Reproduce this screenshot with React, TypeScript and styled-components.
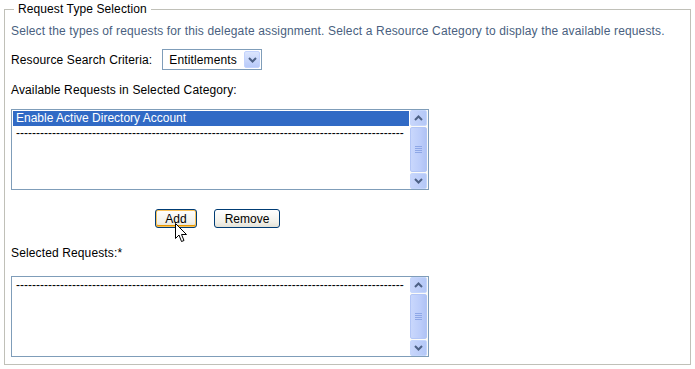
import React from "react";
import styled, { createGlobalStyle } from "styled-components";

const Global = createGlobalStyle`
  html, body { margin: 0; padding: 0; background: #ffffff; }
  body { font-family: "Liberation Sans", Arial, sans-serif; font-size: 12px; color: #000; }
`;

const Fieldset = styled.fieldset`
  margin: 2px 4px 0 4px;
  padding: 0 6px 5px 6px;
  border: 1px solid #c0c0b8;
  height: 363px;
  box-sizing: border-box;
  position: relative;

  legend {
    padding: 0 4px;
    margin-left: 3px;
    font-size: 12px;
    letter-spacing: 0.1px;
    color: #000;
  }
`;

const Intro = styled.div`
  color: #4a5f80;
  margin-top: 8px;
  line-height: 14px;
  letter-spacing: 0.15px;
`;

const Label = styled.div<{ $top: number }>`
  margin-top: ${(p) => p.$top}px;
  line-height: 14px;
  letter-spacing: 0.13px;
`;

const Row = styled.div`
  display: flex;
  align-items: center;
  gap: 10px;
  margin-top: 11px;
  letter-spacing: 0.13px;
`;

const Select = styled.div`
  display: flex;
  align-items: center;
  justify-content: space-between;
  width: 100px;
  height: 21px;
  box-sizing: border-box;
  border: 1px solid #7f9db9;
  padding: 0 1px 0 6px;
  background: #fff;
`;

const DropBtn = styled.div`
  width: 16px;
  height: 17px;
  box-sizing: border-box;
  border: 1px solid #c3d3fd;
  border-radius: 2px;
  background: linear-gradient(#dbe5fd, #b8caf9);
  display: flex;
  align-items: center;
  justify-content: center;
`;

const ListBox = styled.div<{ $top: number }>`
  margin-top: ${(p) => p.$top}px;
  width: 418px;
  height: 81px;
  box-sizing: border-box;
  border: 1px solid #7f9db9;
  display: flex;
  background: #fff;
`;

const Items = styled.div`
  flex: 1;
  padding: 1px 1px 0 1px;
  overflow: hidden;
`;

const Item = styled.div<{ $selected?: boolean }>`
  height: 15px;
  line-height: 15px;
  padding-left: 3px;
  white-space: nowrap;
  overflow: hidden;
  background: ${(p) => (p.$selected ? "#316ac5" : "transparent")};
  color: ${(p) => (p.$selected ? "#fff" : "#000")};
`;

const Scrollbar = styled.div`
  width: 17px;
  display: flex;
  flex-direction: column;
  background: #fbfbf8;
  padding: 0 1px 0 0;
  gap: 1px;
`;

const ScrollBtn = styled.div`
  height: 16px;
  box-sizing: border-box;
  border: 1px solid #c5d6fc;
  border-radius: 2px;
  background: linear-gradient(90deg, #c8d6fb, #b4c8f7);
  display: flex;
  align-items: center;
  justify-content: center;
`;

const Thumb = styled.div`
  flex: 1;
  box-sizing: border-box;
  border: 1px solid #b3c6f6;
  border-radius: 2px;
  background: linear-gradient(90deg, #c9d7fc, #bccdfa 60%, #b0c3f5);
  display: flex;
  align-items: center;
  justify-content: center;
`;

const Buttons = styled.div`
  display: flex;
  gap: 17px;
  margin-top: 19px;
  margin-left: 144px;
  position: relative;
`;

const Button = styled.div<{ $focus?: boolean; $w: number }>`
  width: ${(p) => p.$w}px;
  height: 19px;
  box-sizing: border-box;
  border: 1px solid #003c74;
  border-radius: 3px;
  background: linear-gradient(#ffffff, #f2f1ea 70%, #e3e1d6);
  box-shadow: ${(p) => (p.$focus ? "inset 0 0 0 1px #f9c25a, inset 0 -1px 0 1px #e59700" : "none")};
  display: flex;
  align-items: center;
  justify-content: center;
  font-size: 12px;
`;

const Cursor = styled.svg`
  position: absolute;
  left: 20px;
  top: 14px;
`;

const Chevron = ({ up }: { up?: boolean }) => (
  <svg width="9" height="6" viewBox="0 0 9 6">
    <path
      d={up ? "M1 5 L4.5 1.5 L8 5" : "M1 1 L4.5 4.5 L8 1"}
      stroke="#4d6185"
      strokeWidth="2"
      fill="none"
    />
  </svg>
);

const Grip = () => (
  <svg width="7" height="8" viewBox="0 0 7 8">
    {[0, 2, 4, 6].map((y) => (
      <rect key={y} x="0" y={y} width="7" height="1" fill="#8ea7e6" />
    ))}
  </svg>
);

const Bar = () => (
  <Scrollbar>
    <ScrollBtn>
      <Chevron up />
    </ScrollBtn>
    <Thumb>
      <Grip />
    </Thumb>
    <ScrollBtn>
      <Chevron />
    </ScrollBtn>
  </Scrollbar>
);

const dashes = "-".repeat(97);

export default function App() {
  return (
    <>
      <Global />
      <Fieldset>
        <legend>Request Type Selection</legend>
        <Intro>
          Select the types of requests for this delegate assignment. Select a Resource Category to display the
          available requests.
        </Intro>
        <Row>
          <span>Resource Search Criteria:</span>
          <Select>
            <span>Entitlements</span>
            <DropBtn>
              <Chevron />
            </DropBtn>
          </Select>
        </Row>
        <Label $top={13}>Available Requests in Selected Category:</Label>
        <ListBox $top={12}>
          <Items>
            <Item $selected>Enable Active Directory Account</Item>
            <Item>{dashes}</Item>
          </Items>
          <Bar />
        </ListBox>
        <Buttons>
          <Button $w={42} $focus>
            Add
          </Button>
          <Button $w={66}>Remove</Button>
          <Cursor width="13" height="20" viewBox="0 0 13 20">
            <path
              d="M0.5 0.5 L0.5 15.5 L4 12 L6.5 18.5 L9 17.5 L6.5 11.5 L11.5 11.5 Z"
              fill="#fff"
              stroke="#000"
              strokeWidth="1"
            />
          </Cursor>
        </Buttons>
        <Label $top={18}>Selected Requests:*</Label>
        <ListBox $top={16}>
          <Items>
            <Item>{dashes}</Item>
          </Items>
          <Bar />
        </ListBox>
      </Fieldset>
    </>
  );
}
